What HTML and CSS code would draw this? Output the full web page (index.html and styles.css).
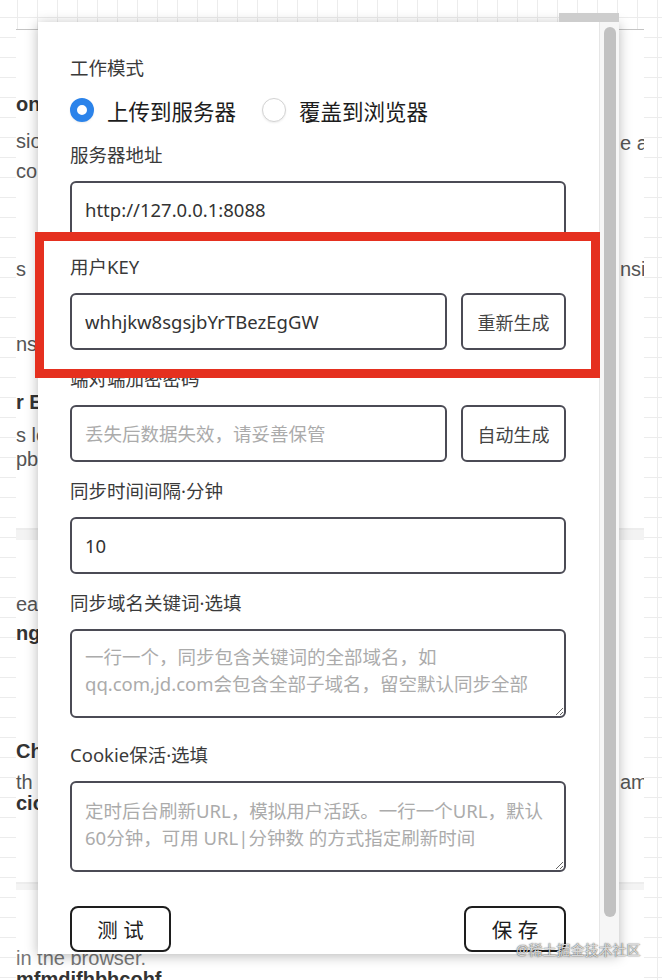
FILE: index.html
```html
<!DOCTYPE html>
<html lang="zh-CN">
<head>
    <meta charset="UTF-8">
    <meta name="viewport" content="width=device-width, initial-scale=1.0">
    <title>CookieCloud 设置</title>
    <link rel="stylesheet" href="styles.css">
</head>
<body>

    <!-- page behind the popup -->
    <div class="bg-card">
        <div class="bg-left">
            <span class="b">on</span>
            <span>sio</span>
            <span>co</span>
            <span>s</span>
            <span>ns</span>
            <span class="b">r E</span>
            <span>s lo</span>
            <span>pb</span>
            <span>ea</span>
            <span class="b">ng</span>
            <span class="b">Ch</span>
            <span>th</span>
            <span class="b">cio</span>
            <span class="muted">in the browser.</span>
            <span class="b">mfmdifhbhcohf</span>
        </div>
        <div class="bg-right">
            <span>e a</span>
            <span>nsi</span>
            <span>am</span>
        </div>
    </div>

    <!-- extension popup -->
    <div class="popup">
        <div class="popup-tab"></div>
        <form class="popup-body">
            <label class="field-label first">工作模式</label>
            <div class="radio-row">
                <label class="radio"><input type="radio" name="mode" value="up" checked> 上传到服务器</label>
                <label class="radio"><input type="radio" name="mode" value="down"> 覆盖到浏览器</label>
            </div>

            <label class="field-label" for="endpoint">服务器地址</label>
            <input class="text-input" type="text" id="endpoint" value="http://127.0.0.1:8088">

            <label class="field-label" for="uuid">用户KEY</label>
            <div class="input-row">
                <input class="text-input" type="text" id="uuid" value="whhjkw8sgsjbYrTBezEgGW">
                <button type="button" class="side-btn">重新生成</button>
            </div>

            <label class="field-label" for="password">端对端加密密码</label>
            <div class="input-row">
                <input class="text-input" type="text" id="password" placeholder="丢失后数据失效，请妥善保管">
                <button type="button" class="side-btn">自动生成</button>
            </div>

            <label class="field-label" for="interval">同步时间间隔·分钟</label>
            <input class="text-input" type="text" id="interval" value="10">

            <label class="field-label" for="domains">同步域名关键词·选填</label>
            <textarea class="text-area" id="domains" placeholder="一行一个，同步包含关键词的全部域名，如&#10;qq.com,jd.com会包含全部子域名，留空默认同步全部"></textarea>

            <label class="field-label after-area" for="keepalive">Cookie保活·选填</label>
            <textarea class="text-area tall" id="keepalive" placeholder="定时后台刷新URL，模拟用户活跃。一行一个URL，默认&#10;60分钟，可用 URL|分钟数 的方式指定刷新时间"></textarea>

            <div class="actions">
                <button type="button" class="main-btn">测 试</button>
                <button type="button" class="main-btn save">保 存</button>
            </div>
        </form>
        <div class="scrollbar"><div class="thumb"></div></div>
    </div>

    <div class="highlight"></div>
    <div class="watermark">@稀土掘金技术社区</div>

</body>
</html>
```

FILE: styles.css
```css
body {
    margin: 0;
    width: 662px;
    height: 980px;
    overflow: hidden;
    position: relative;
    font-family: "Noto Sans", "Noto Sans CJK SC", sans-serif;
    background-color: #fff;
    background-image:
        linear-gradient(#ececec 1px, transparent 1px),
        linear-gradient(90deg, #ececec 1px, transparent 1px);
    background-size: 20px 20px;
    background-position: 17px 17px;
}

/* background page */
.bg-card {
    margin: 29px 0 0 16px;
    width: 628px;
    height: 951px;
    border-top: 1px solid #c4c4c4;
    background: linear-gradient(#fff 0 498px, #ededed 498px 500px, #f3f3f3 500px 510px, #fff 510px 852px, #ededed 852px 854px, #f4f4f4 854px 860px, #fff 860px);
    display: flex;
    justify-content: space-between;
    font-family: "Liberation Sans", sans-serif;
    font-size: 20px;
    color: #555;
}
.bg-left {
    width: 22px;
    padding-top: 62px;
    display: grid;
    grid-template-rows: 37px 30px 98px 75px 58px 33px 24px 145px 29px 118px 31px 21px 155px 21px;
    line-height: 24px;
    white-space: nowrap;
}
.bg-right {
    width: 24px;
    overflow: hidden;
    padding-top: 101px;
    display: grid;
    grid-template-rows: 126px 513px;
    align-content: start;
    line-height: 24px;
    white-space: nowrap;
}
.b {
    font-weight: bold;
    color: #333;
}
.muted {
    color: #777;
}

/* popup */
.popup {
    position: absolute;
    left: 38px;
    top: 22px;
    width: 581px;
    height: 932px;
    background: #fff;
    display: flex;
    box-shadow: 0 2px 12px rgba(0, 0, 0, 0.28);
}
.popup-tab {
    position: absolute;
    right: 0;
    top: -9px;
    width: 60px;
    height: 9px;
    background: #cdcdcd;
}
.popup-body {
    flex: 1;
    padding: 34px 33px 0 32px;
    overflow: hidden;
    display: flex;
    flex-direction: column;
}
.scrollbar {
    width: 20px;
    box-sizing: border-box;
    background: #f6f6f6;
    border-left: 1px solid #e6e6e6;
    padding: 5px 3px 0 4px;
}
.thumb {
    height: 890px;
    border-radius: 6px;
    background: #c1c1c1;
}

.field-label {
    display: block;
    margin-top: 17px;
    line-height: 24px;
    font-size: 18.5px;
    color: #3a3a3a;
}
.field-label.first {
    margin-top: 0;
}
.field-label.after-area {
    margin-top: 25px;
}

.radio-row {
    display: flex;
    align-items: center;
    height: 36px;
    margin-top: 12px;
    margin-bottom: -2px;
}
.radio {
    display: flex;
    align-items: center;
    gap: 13px;
    font-size: 21.5px;
    color: #1c1c1c;
}
.radio + .radio {
    margin-left: 26px;
}
.radio input {
    appearance: none;
    margin: 0;
    width: 24px;
    height: 24px;
    box-sizing: border-box;
    border-radius: 50%;
    border: 1px solid #d3d3d3;
    background: #fff;
    box-shadow: 0 1px 2px rgba(0, 0, 0, 0.08);
}
.radio input:checked {
    border: 7px solid #2b83ea;
}

.text-input, .text-area {
    display: block;
    width: 100%;
    box-sizing: border-box;
    margin-top: 14px;
    border: 2px solid #4b4b55;
    border-radius: 6px;
    background: #fff;
    font-family: "Noto Sans", "Noto Sans CJK SC", sans-serif;
    font-size: 18.5px;
    color: #333;
    outline: none;
}
.text-input {
    height: 57px;
    padding: 0 13px;
}
.text-area {
    height: 89px;
    padding: 12px 6px 12px 13px;
    line-height: 27px;
    resize: vertical;
}
.text-area.tall {
    height: 91px;
    padding-top: 14px;
}
.text-input::placeholder, .text-area::placeholder {
    color: #ababab;
}

.input-row {
    display: flex;
    gap: 14px;
    margin-top: 14px;
}
.input-row .text-input {
    flex: 1;
    margin-top: 0;
}
.side-btn {
    width: 105px;
    height: 57px;
    flex-shrink: 0;
    border: 2px solid #4b4b55;
    border-radius: 6px;
    background: #fff;
    font-family: "Noto Sans", "Noto Sans CJK SC", sans-serif;
    font-size: 18px;
    color: #444;
    padding: 0;
}

.actions {
    display: flex;
    justify-content: space-between;
    margin-top: 34px;
}
.main-btn {
    width: 101px;
    height: 46px;
    border: 2px solid #1e1e1e;
    border-radius: 8px;
    background: #fff;
    font-family: "Noto Sans", "Noto Sans CJK SC", sans-serif;
    font-size: 20.5px;
    color: #1e1e1e;
    padding: 0;
}
.main-btn.save {
    width: 102px;
}

/* annotation and watermark */
.highlight {
    position: absolute;
    left: 35px;
    top: 232px;
    width: 565px;
    height: 146px;
    box-sizing: border-box;
    border: 9px solid #e5301f;
}
.watermark {
    position: absolute;
    left: 516px;
    top: 940px;
    font-size: 14px;
    line-height: 20px;
    color: rgba(235, 235, 235, 0.9);
    text-shadow: 0 0 1px rgba(0, 0, 0, 0.7), 0 0 2px rgba(0, 0, 0, 0.4);
}
```
